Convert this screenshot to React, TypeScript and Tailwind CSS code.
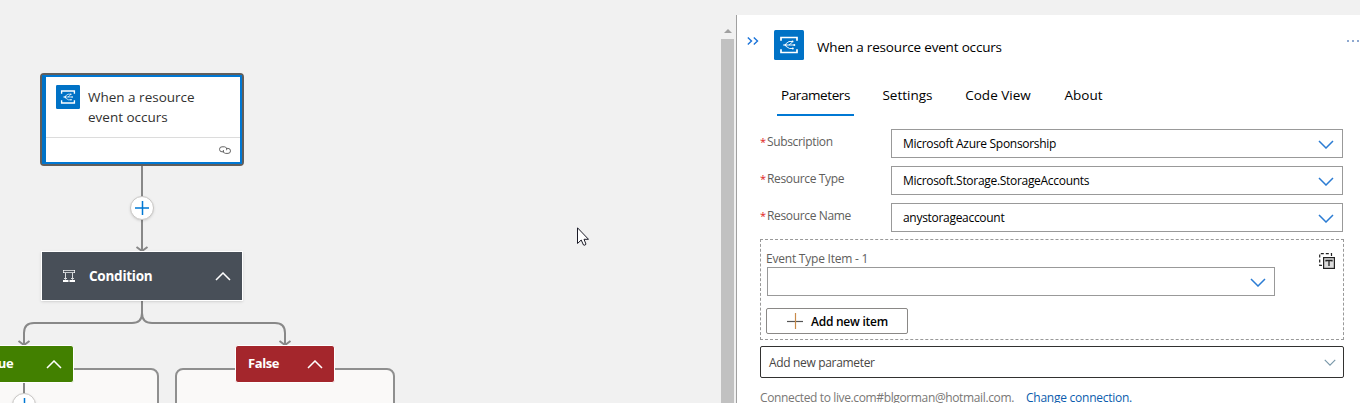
import type { ReactNode } from "react";

function EventGridIcon({ className }: { className: string }) {
  return (
    <svg viewBox="0 0 30 30" className={className} fill="none">
      <rect width="30" height="30" rx="1.5" fill="#0072c6" />
      <path d="M7 10.800V7.500H23V10.800M7 19.200V22.500H23V19.200" stroke="#fff" strokeWidth="1.700" />
      <path d="M9 15H20M11.500 14L15 11.500H18M11.500 16L15.500 18.500H18.500M15 15L18 12.500" stroke="#fff" strokeWidth="0.9" />
      <circle cx="11.500" cy="15" r="1.100" fill="#fff" />
      <circle cx="20.300" cy="15" r="1" fill="#fff" />
      <circle cx="18.500" cy="11.600" r="1" fill="#fff" />
      <circle cx="18.800" cy="18.400" r="1" fill="#fff" />
    </svg>
  );
}

function Chevron({ up = false, className }: { up?: boolean; className: string }) {
  return (
    <svg viewBox="0 0 16 9" className={className} fill="none" stroke="currentColor" strokeWidth="1.5">
      <path d={up ? "M1 8L8 1L15 8" : "M1 1L8 8L15 1"} />
    </svg>
  );
}

function AddButton({ className }: { className: string }) {
  return (
    <div className={`absolute size-6 rounded-full border border-[#c8c6c4] bg-white shadow-sm ${className}`}>
      <svg viewBox="0 0 22 22" className="size-full" stroke="#0078d4" strokeWidth="1.5">
        <path d="M4 11H18M11.500 4V18" />
      </svg>
    </div>
  );
}

function Canvas() {
  return (
    <div className="relative h-full w-[720px] shrink-0 overflow-hidden">
      <div className="absolute left-[-110px] top-[368px] h-20 w-[269px] rounded-[8px] border-2 border-[#8f8f8f] bg-[#faf9f8]" />
      <div className="absolute left-[175px] top-[368px] h-20 w-[220px] rounded-[8px] border-2 border-[#8f8f8f] bg-[#faf9f8]" />
      <svg className="absolute left-0 top-0 h-[403px] w-[720px]" fill="none" stroke="#888" strokeWidth="2">
        <path d="M142 165V250M136.500 247L142 251L147.500 247" />
        <path d="M142 300V313Q142 323 132 323H34Q24 323 24 333V345M18.500 341L24 345L29.500 341" />
        <path d="M142 300V313Q142 323 152 323H275Q285 323 285 333V345M279.500 341L285 345L290.500 341" />
        <path d="M24 383V396" />
      </svg>

      <div className="absolute left-10 top-[73px] h-[93px] w-[204px] rounded-[4px] border-2 border-[#605e5c] bg-white">
        <div className="flex h-full flex-col border-2 border-l-4 border-[#0078d4] border-l-[#0072c6]">
          <div className="flex h-[61px] shrink-0 gap-2 border-b border-[#dcdcdc] pl-[10px] pt-2">
            <EventGridIcon className="size-6 shrink-0" />
            <div className="pt-[2px] text-[13.500px] leading-5 text-[#323130]">
              <div className="whitespace-nowrap">When a resource</div>
              <div className="whitespace-nowrap">event occurs</div>
            </div>
          </div>
          <div className="flex flex-1 items-center justify-end pr-[9px]">
            <svg viewBox="0 0 12 8" className="h-2 w-3" fill="none" stroke="#555" strokeWidth="0.9">
              <path d="M5 5.800H3A2.400 2.400 0 0 1 3 .8H5.500A2.400 2.400 0 0 1 7.500 4.200" />
              <path d="M7.500 2.400H9A2.400 2.400 0 0 1 9 7.400H6.500A2.400 2.400 0 0 1 4.500 4" />
            </svg>
          </div>
        </div>
      </div>

      <AddButton className="left-[130px] top-[196px]" />

      <div className="absolute left-[41px] top-[251px] flex h-[50px] w-[202px] items-center border border-white bg-[#484f58] text-white shadow-sm">
        <svg viewBox="0 0 12 12" className="ml-[21px] size-3" fill="none" stroke="#fff">
          <path d="M0 .5H12M0 2.500H12M.5 0V3M11.500 0V3" strokeWidth="0.7" />
          <path d="M2.500 3V9M9.500 3V9M1 8L2.500 9.500L4 8M8 8L9.500 9.500L11 8" strokeWidth="0.8" />
          <path d="M0 11H5.500M6.500 11H12" strokeWidth="2" />
        </svg>
        <span className="ml-[14px] text-[13.500px] font-bold tracking-[-0.25px]">Condition</span>
        <Chevron up className="ml-auto mr-[11px] h-[9px] w-4" />
      </div>

      <div className="absolute left-[-26px] top-[345px] flex h-[38px] w-[100px] items-center rounded-[3px] border border-white bg-[#428000] text-white">
        <span className="ml-[10px] text-[13px] font-bold tracking-[-0.3px]">True</span>
        <Chevron up className="ml-auto mr-[11px] h-[9px] w-4" />
      </div>
      <div className="absolute left-[235px] top-[345px] flex h-[38px] w-[100px] items-center rounded-[3px] border border-white bg-[#a4262c] text-white">
        <span className="ml-[12px] text-[13px] font-bold tracking-[-0.4px]">False</span>
        <Chevron up className="ml-auto mr-[11px] h-[9px] w-4" />
      </div>
      <AddButton className="left-[12px] top-[393px]" />

      <svg viewBox="0 0 12 19" className="absolute left-[577px] top-[227px] h-[19px] w-3">
        <path d="M.5 .8V16.500L4.200 13L6.500 18Q8 18.800 9 17.200L7 12.300H11.500Z" fill="#fff" stroke="#1c1c28" strokeWidth="1" />
      </svg>
    </div>
  );
}

function Scrollbar() {
  return (
    <div className="flex h-full w-4 shrink-0 flex-col items-center pt-[29px]">
      <svg viewBox="0 0 8 4" className="h-1 w-2">
        <path d="M4 0L8 4H0Z" fill="#a0a0a0" />
      </svg>
      <div className="mr-[1px] mt-[6px] w-[13px] flex-1 bg-[#c1c1c1]" />
    </div>
  );
}

function Field({ label, value }: { label: string; value: string }) {
  return (
    <div className="flex h-[29px]">
      <div className="flex w-[131px] shrink-0 whitespace-nowrap pt-[3px] text-[12px] leading-5 tracking-[-0.350px] text-[#605e5c]">
        <span className="w-[7px] text-[11px] text-[#e02020]">*</span>
        {label}
      </div>
      <div className="flex w-[452px] items-center justify-between border border-[#999] pl-[11px] pr-2 text-[12px] tracking-[-0.3px] text-black">
        <span>{value}</span>
        <Chevron className="mt-[2px] h-[9px] w-4 text-[#2b7cd3]" />
      </div>
    </div>
  );
}

function Tab({ children, className }: { children: ReactNode; className: string }) {
  return <div className={`h-[30px] whitespace-nowrap text-center text-[13.500px] leading-[18px] ${className}`}>{children}</div>;
}

function Panel() {
  return (
    <div className="mt-[15px] flex h-[388px] min-w-0 flex-1 flex-col border-l border-[#a0a0a0] bg-white text-black">
      <div className="flex h-[71px] shrink-0 pt-[15px]">
        <svg viewBox="0 0 12 8" className="ml-[10px] mt-[7px] h-2 w-3" fill="none" stroke="#1a73d9" strokeWidth="1.400">
          <path d="M.8 .5L4.500 4L.8 7.500M6.800 .5L10.500 4L6.800 7.500" />
        </svg>
        <EventGridIcon className="ml-[15px] size-[30px]" />
        <div className="ml-[13px] mt-[7px] whitespace-nowrap text-[13.500px] leading-5 tracking-[-0.180px]">When a resource event occurs</div>
        <div className="ml-auto mr-[1px] mt-[10px] flex h-[2px] gap-[3px]">
          <span className="h-[2px] w-[2px] bg-[#8fa9d0]" />
          <span className="h-[2px] w-[2px] bg-[#8fa9d0]" />
          <span className="h-[2px] w-[2px] bg-[#8fa9d0]" />
        </div>
      </div>
      <div className="ml-10 flex h-[43px] shrink-0">
        <Tab className="w-[77px] border-b-2 border-[#0078d4] tracking-[-0.4px]">Parameters</Tab>
        <Tab className="ml-[25px] w-[57px]">Settings</Tab>
        <Tab className="ml-[24px] w-[76px]">Code View</Tab>
        <Tab className="ml-[21px] w-[53px]">About</Tab>
      </div>
      <div className="ml-[23px] flex w-[584px] flex-col">
        <div className="flex flex-col gap-2">
          <Field label="Subscription" value="Microsoft Azure Sponsorship" />
          <Field label="Resource Type" value="Microsoft.Storage.StorageAccounts" />
          <Field label="Resource Name" value="anystorageaccount" />
        </div>
        <div className="mt-[7px] flex h-[101px] justify-between border border-dashed border-[#999] pl-[5px] pr-2">
          <div className="flex flex-col">
            <div className="mt-[9px] h-[18px] text-[12px] leading-[20px] tracking-[-0.220px] text-[#605e5c]">Event Type Item - 1</div>
            <div className="ml-px flex h-[29px] w-[508px] items-center justify-end border border-[#999] pr-2">
              <Chevron className="mt-[2px] h-[9px] w-4 text-[#2b7cd3]" />
            </div>
            <div className="mt-3 flex h-[26px] w-[142px] items-center rounded-[2px] border border-[#8a8886] pl-5 text-[12px] font-semibold tracking-[-0.250px]">
              <svg viewBox="0 0 16 16" className="mr-2 size-4" strokeWidth="1.200">
                <path d="M0 8.500H16" stroke="#555" />
                <path d="M8.500 0V16" stroke="#c98a4a" />
              </svg>
              <span className="pt-[2px]">Add new item</span>
            </div>
          </div>
          <svg viewBox="0 0 16 16" className="mt-[13px] size-4" fill="none" stroke="#222">
            <path d="M12.500 3V.7H.7V12.300H4" strokeDasharray="3 2" strokeWidth="1.200" />
            <rect x="4.600" y="4.600" width="10.800" height="10.800" fill="#ddd" strokeWidth="1.200" />
            <path d="M7 8.500V7.500H13V8.500M10 7.500V13" strokeWidth="1.300" />
          </svg>
        </div>
        <div className="mt-[6px] flex h-8 items-center justify-between rounded-[2px] border border-[#323130] pl-2 pr-[7px] text-[12px] tracking-[-0.330px] text-[#484644]">
          <span className="pt-[2px]">Add new parameter</span>
          <Chevron className="h-[7px] w-3 text-[#7897a8]" />
        </div>
        <div className="mt-[10px] flex whitespace-nowrap text-[12px] leading-5 text-[#797775]">
          <span className="w-[266px] tracking-[-0.370px]">Connected to live.com#blgorman@hotmail.com.</span>
          <span className="tracking-[-0.250px] text-[#0b5cad]">Change connection.</span>
        </div>
      </div>
    </div>
  );
}

export default function App() {
  return (
    <div className="flex h-[403px] w-[1360px] overflow-hidden bg-[#f1f1f1] font-['Open_Sans','Noto_Sans',sans-serif]">
      <Canvas />
      <Scrollbar />
      <Panel />
    </div>
  );
}
